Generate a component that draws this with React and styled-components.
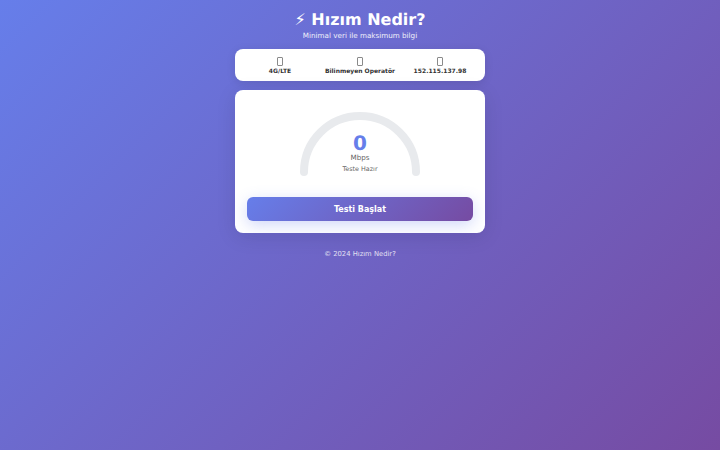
import React from "react";
import styled, { createGlobalStyle } from "styled-components";

const GlobalStyle = createGlobalStyle`
  * {
    box-sizing: border-box;
    margin: 0;
    padding: 0;
  }
  html, body, #root {
    height: 100%;
  }
  body {
    font-family: "DejaVu Sans", sans-serif;
    text-rendering: geometricPrecision;
    background: linear-gradient(135deg, #667eea 0%, #764ba2 100%);
    color: #333;
  }
`;

const Page = styled.div`
  width: 250px;
  margin: 0 auto;
  padding-top: 10px;
`;

const Header = styled.header`
  text-align: center;
  color: #fff;
  margin-bottom: 9px;
`;

const Title = styled.h1`
  font-size: 16px;
  line-height: 20px;
  font-weight: 700;
  margin-bottom: 1px;
`;

const Subtitle = styled.p`
  font-size: 7.2px;
  line-height: 9px;
  opacity: 0.9;
`;

const InfoBar = styled.div`
  display: grid;
  grid-template-columns: repeat(3, 1fr);
  height: 32px;
  padding: 7px 5px;
  background: #fff;
  border-radius: 8px;
  box-shadow: 0 2px 10px rgba(0, 0, 0, 0.1);
  margin-bottom: 9px;
`;

const InfoItem = styled.div`
  display: flex;
  flex-direction: column;
  align-items: center;
`;

const MissingGlyph = styled.span`
  display: block;
  width: 6px;
  height: 9px;
  margin-top: 1px;
  border: 1px solid #8a8a8a;
  border-radius: 1px;
`;

const InfoText = styled.span`
  font-size: 6px;
  line-height: 8px;
  font-weight: 600;
  margin-top: 2px;
  color: #333;
`;

const Card = styled.section`
  background: #fff;
  border-radius: 8px;
  padding: 22px 12px 12px;
  box-shadow: 0 4px 20px rgba(0, 0, 0, 0.1);
`;

const Gauge = styled.div`
  position: relative;
  width: 120px;
  height: 74px;
  margin: 0 auto 11px;
`;

const GaugeSvg = styled.svg`
  display: block;
  width: 120px;
  height: 74px;
`;

const GaugeLabel = styled.div`
  position: absolute;
  left: 0;
  right: 0;
  top: 21px;
  text-align: center;
`;

const Speed = styled.div`
  font-size: 20px;
  line-height: 20px;
  font-weight: 700;
  color: #667eea;
`;

const Unit = styled.div`
  font-size: 7.2px;
  line-height: 9px;
  color: #666;
`;

const Status = styled.div`
  font-size: 6.4px;
  line-height: 8px;
  margin-top: 3px;
  color: #666;
`;

const StartButton = styled.button`
  display: block;
  width: 100%;
  height: 24px;
  border: none;
  border-radius: 6px;
  font-family: inherit;
  font-size: 8px;
  font-weight: 600;
  color: #fff;
  background: linear-gradient(135deg, #667eea 0%, #764ba2 100%);
  box-shadow: 0 4px 15px rgba(102, 126, 234, 0.3);
`;

const Footer = styled.footer`
  margin-top: 16px;
  text-align: center;
  font-size: 6.8px;
  line-height: 10px;
  color: #fff;
  opacity: 0.8;
`;

export default function App() {
  return (
    <>
      <GlobalStyle />
      <Page>
        <Header>
          <Title>⚡ Hızım Nedir?</Title>
          <Subtitle>Minimal veri ile maksimum bilgi</Subtitle>
        </Header>
        <InfoBar>
          <InfoItem>
            <MissingGlyph />
            <InfoText>4G/LTE</InfoText>
          </InfoItem>
          <InfoItem>
            <MissingGlyph />
            <InfoText>Bilinmeyen Operatör</InfoText>
          </InfoItem>
          <InfoItem>
            <MissingGlyph />
            <InfoText>152.115.137.98</InfoText>
          </InfoItem>
        </InfoBar>
        <Card>
          <Gauge>
            <GaugeSvg viewBox="0 0 120 74">
              <path
                d="M 4 60 A 56 56 0 0 1 116 60"
                fill="none"
                stroke="#e8eaed"
                strokeWidth="8"
                strokeLinecap="round"
              />
            </GaugeSvg>
            <GaugeLabel>
              <Speed>0</Speed>
              <Unit>Mbps</Unit>
              <Status>Teste Hazır</Status>
            </GaugeLabel>
          </Gauge>
          <StartButton>Testi Başlat</StartButton>
        </Card>
        <Footer>© 2024 Hızım Nedir?</Footer>
      </Page>
    </>
  );
}
